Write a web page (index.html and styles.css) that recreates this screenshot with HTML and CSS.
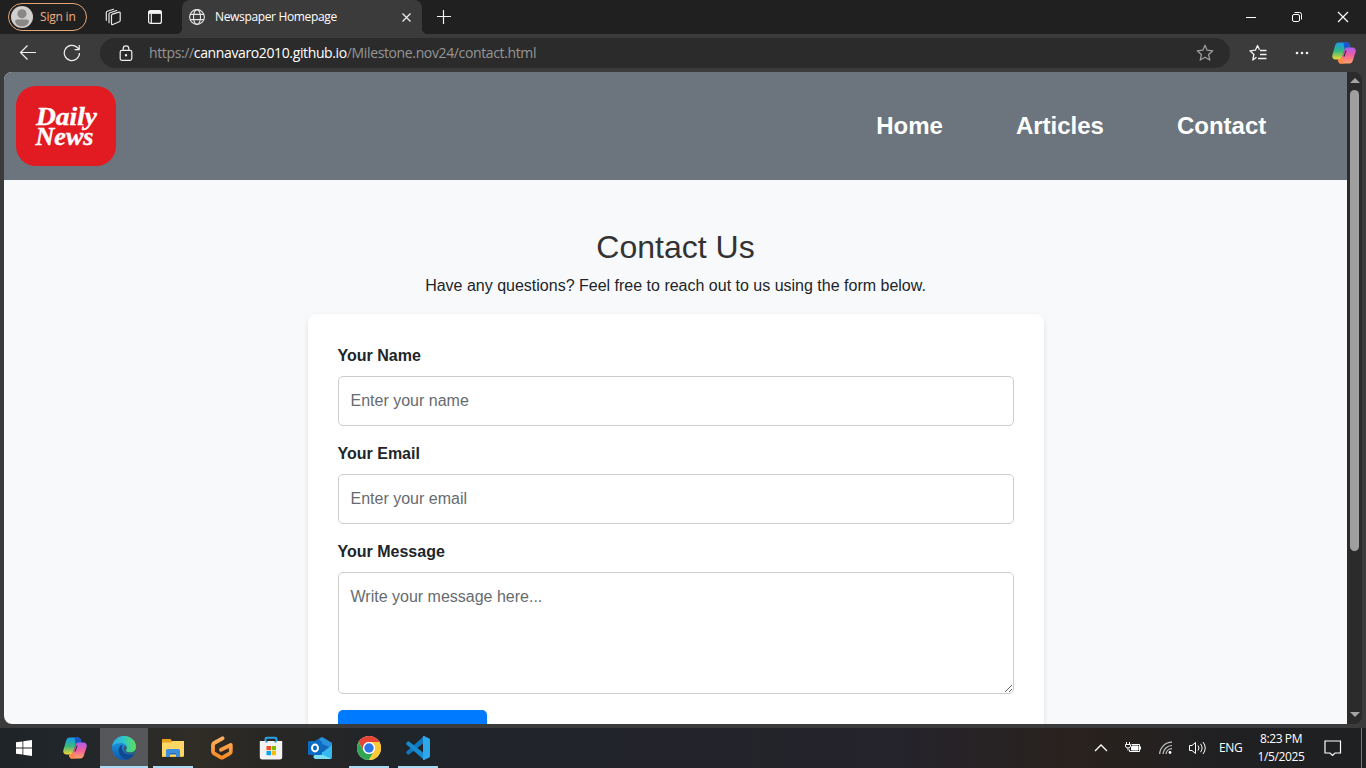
FILE: index.html
```html
<!DOCTYPE html>
<html lang="en">
<head>
<meta charset="utf-8">
<title>Newspaper Homepage</title>
<link rel="stylesheet" href="styles.css">
</head>
<body>
<svg width="0" height="0" class="defs">
  <defs>
    <linearGradient id="cpA" x1="0" y1="0" x2="0" y2="1"><stop offset="0" stop-color="#169cf0"/><stop offset=".5" stop-color="#35b880"/><stop offset="1" stop-color="#f5d632"/></linearGradient>
    <linearGradient id="cpB" x1="0" y1="0" x2="0" y2="1"><stop offset="0" stop-color="#b05cf0"/><stop offset=".5" stop-color="#f0609a"/><stop offset="1" stop-color="#ffa468"/></linearGradient>
    <linearGradient id="edA" x1="0" y1="0" x2="1" y2="0"><stop offset="0" stop-color="#2aa8e8"/><stop offset=".5" stop-color="#31c7c4"/><stop offset="1" stop-color="#5ede55"/></linearGradient>
    <linearGradient id="edB" x1="0" y1="0" x2="0" y2="1"><stop offset="0" stop-color="#25a5e8"/><stop offset="1" stop-color="#0c59b0"/></linearGradient>
    <linearGradient id="gA" x1="0" y1="0" x2="0" y2="1"><stop offset="0" stop-color="#ffb061"/><stop offset="1" stop-color="#f98a24"/></linearGradient>
    <symbol id="copilot" viewBox="0 0 24 24">
      <path d="M6.500 1.500h8.500c1.500 0 2.200.8 2.700 2.300l.8 2.700h-2.500c-2 0-3 .8-3.600 2.600L10 16c-.6 1.700-1.600 2.500-3.300 2.500H3.500C.8 18.500-.2 16.500.4 14L3 5c.6-2.200 1.500-3.500 3.500-3.500z" fill="url(#cpA)"/>
      <path d="M11.500 1.500H15c1.500 0 2.200.8 2.700 2.300l.8 2.700H16c-1.800 0-2.700.6-3.300 2z" fill="#1b55d0"/>
      <path d="M17.500 22.500H9c-1.500 0-2.200-.8-2.700-2.300l-.6-1.700h1c1.700 0 2.700-.8 3.300-2.500l2.700-7.500c.6-1.300 1.500-2 3.300-2h4.500c2.700 0 3.700 2 3.100 4.500L21 19c-.6 2.200-1.500 3.500-3.500 3.500z" fill="url(#cpB)"/>
      <path d="M12.500 22.500H9c-1.500 0-2.200-.8-2.700-2.300l-.6-1.700h1c1.800 0 3-.8 3.600-2.700z" fill="#ff8a4a"/>
      <path d="M13.400 9.500h1.200l-2 6h-1.200z" fill="#3a2a35"/>
    </symbol>
  </defs>
</svg>

<div class="titlebar">
  <div class="signin">
    <svg width="22" height="22" viewBox="0 0 22 22"><circle cx="11" cy="11" r="11" fill="#d2d0ce"/><circle cx="11" cy="7.800" r="4.600" fill="#8a8886"/><path d="M4 15.500q0-2 2-2h10q2 0 2 2-1.500 5-7 5t-7-5z" fill="#8a8886"/></svg>
    <span>Sign in</span>
  </div>
  <svg class="workspaces" width="18" height="18" viewBox="0 0 18 18" fill="none" stroke="#e8e8e8" stroke-width="1.200" stroke-linejoin="round" stroke-linecap="round"><path d="M7.500 7.500q0-1 1-1.400l6.500-2q1.200-.3 1.200.8v7.600q0 .9-.9 1.200l-6.500 2.800q-1.300.5-1.300-.8z"/><path d="M5 14.700V6.200q0-1 1-1.400L12.800 2.500M2.300 12.300V4.700q0-1 1-1.400L9.500 1.200"/></svg>
  <svg class="tab-actions" width="16" height="16" viewBox="0 0 16 16" fill="none" stroke="#f4f4f4" stroke-width="1.200"><rect x="1.600" y="1.600" width="12.800" height="12.800" rx="2"/><path d="M1.600 3.300h12.800" stroke-width="3.200"/><path d="M4.300 5v9.400"/></svg>
  <div class="tab">
    <svg width="16" height="16" viewBox="0 0 16 16" fill="none" stroke="#e6e6e6" stroke-width="1.100"><circle cx="8" cy="8" r="7.400"/><ellipse cx="8" cy="8" rx="3.500" ry="7.400"/><path d="M1.200 5.400h13.600M1.200 10.600h13.600"/></svg>
    <span>Newspaper Homepage</span>
    <svg class="tab-close" width="9" height="9" viewBox="0 0 9 9" stroke="#eee" stroke-width="1.200"><path d="M.5.5l8 8M8.500.5l-8 8"/></svg>
  </div>
  <svg class="new-tab" width="14" height="14" viewBox="0 0 14 14" stroke="#f2f2f2" stroke-width="1.200"><path d="M0 6.500h14M6.500 0v14"/></svg>
  <div class="window-controls">
    <svg width="46" height="34"><path d="M18 17.500h10" stroke="#fff"/></svg>
    <svg width="46" height="34" fill="none" stroke="#fff"><rect x="18.500" y="14.500" width="7" height="7" rx="1.500"/><path d="M20.500 12.500h5q2 0 2 2v5"/></svg>
    <svg width="46" height="34"><path d="M18 12l10 10M28 12L18 22" stroke="#fff" stroke-width="1.200"/></svg>
  </div>
</div>

<div class="toolbar">
  <div class="tool"><svg width="18" height="16" viewBox="0 0 18 16" fill="none" stroke="#f0f0f0" stroke-width="1.200"><path d="M17 7.500H1.500M8.500.5L1.500 7.500l7 7"/></svg></div>
  <div class="tool"><svg width="18" height="18" viewBox="0 0 18 18" fill="none" stroke="#f0f0f0" stroke-width="1.200"><path d="M16.500 9A7.600 7.600 0 1 1 14 3.300l2 2M16.200 1v4.600h-4.600"/></svg></div>
  <div class="address">
    <svg class="lock" width="14" height="17" viewBox="0 0 14 17" fill="none" stroke="#eee" stroke-width="1.200"><rect x="1.200" y="5.300" width="11.600" height="10" rx="1.800"/><path d="M4.200 5V3.700a2.800 2.800 0 0 1 5.600 0V5"/><circle cx="7" cy="10.300" r=".6" fill="#eee"/></svg>
    <div class="url">https://<b>cannavaro2010.github.io</b>/Milestone.nov24/contact.html</div>
    <svg width="18" height="18" viewBox="0 0 18 18" fill="none" stroke="#a0a0a0" stroke-width="1.200" stroke-linejoin="round"><path d="M9 1.200l2.200 5 5.600.6-4.200 3.700 1.200 5.600L9 13.300l-4.800 2.800 1.200-5.600L1.200 6.800l5.600-.6z"/></svg>
  </div>
  <svg class="favorites" width="18" height="18" viewBox="0 0 18 18" fill="none" stroke="#f2f2f2" stroke-width="1.300" stroke-linejoin="round"><path d="M7.500 13.200L3.800 16l1.100-5.500L1 6.800l5.400-.6L8.500 1.500l2 4.200M11 6.500h6.500M11 10.500h6.500M9 14.500h8.500"/></svg>
  <svg class="more" width="14" height="4" fill="#f2f2f2"><circle cx="2" cy="2" r="1.300"/><circle cx="7" cy="2" r="1.300"/><circle cx="12" cy="2" r="1.300"/></svg>
  <svg class="copilot-button" width="24" height="24"><use href="#copilot"/></svg>
</div>

<div class="viewport">
  <div class="page">
    <header class="site-header">
      <svg class="logo" width="100" height="80" viewBox="0 0 100 80"><rect width="100" height="80" rx="20" fill="#e21a22"/><g class="logo-text"><text x="20" y="39.200" textLength="61" lengthAdjust="spacingAndGlyphs">Daily</text><text x="19.500" y="59.200" textLength="58" lengthAdjust="spacingAndGlyphs">News</text></g></svg>
      <nav><a>Home</a><a>Articles</a><a>Contact</a></nav>
    </header>
    <main>
      <h2>Contact Us</h2>
      <p>Have any questions? Feel free to reach out to us using the form below.</p>
      <form class="card">
        <label for="name">Your Name</label>
        <input id="name" type="text" placeholder="Enter your name">
        <label for="email">Your Email</label>
        <input id="email" type="email" placeholder="Enter your email">
        <label for="message">Your Message</label>
        <textarea id="message" placeholder="Write your message here..."></textarea>
        <button type="button" class="submit" aria-label="Send"></button>
      </form>
    </main>
  </div>
  <div class="scrollbar"><i class="up"></i><i class="thumb"></i><i class="down"></i></div>
</div>

<div class="taskbar">
  <div class="app start"><svg width="16" height="16" viewBox="0 0 16 16" fill="#fff"><path d="M0 2.300l6.500-.9v6.200H0zM7.300 1.300L16 0v7.600H7.300zM0 8.400h6.500v6.200L0 13.700zM7.300 8.400H16V16l-8.700-1.300z"/></svg></div>
  <div class="app"><svg width="24" height="24"><use href="#copilot"/></svg></div>
  <div class="app open active"><svg width="24" height="24" viewBox="0 0 24 24"><circle cx="12" cy="12" r="12" fill="url(#edB)"/><path d="M.2 10.500C1 4.500 5.800 0 12 0c7 0 12 5 12 10.700 0 3.700-2.800 5.800-5.900 5.800-2.600 0-4.400-.9-4.400-1.900 0-.7 1-1.100 1-2.900 0-2.700-2.700-4.800-6-4.800-3.700 0-6.800 1.200-8.500 3.600z" fill="url(#edA)"/><path d="M10.500 8.600C7.900 9.600 6.300 12.600 6.800 15.500 7.600 20 11.400 23.300 15.500 23.500c3.500-1.200 6-3.500 7.200-6-3 1.700-7.200 1.700-10.200-.6-2.300-1.700-3.400-5.300-2-8.300z" fill="#10488f"/><path d="M24 13.500c-1.500 2-3.600 3-5.900 3-2.600 0-4.400-.9-4.400-1.900 0-.7 1-1.100 1-2.900 0-.9-.5-1.800-1.200-2.300-2 .8-2.500 4.300-.2 6.600 2.500 2.400 6.600 2.600 9.400 1.300.8-.5 1.300-2.800 1.300-3.800z" fill="#3d5a6e"/></svg></div>
  <div class="app open"><svg width="24" height="24" viewBox="0 0 24 24"><path d="M1 3.500q0-.5.500-.5h8l1.500 2H22v16H1z" fill="#e8a31c"/><path d="M1 6.500h9l2-1.500h11v15.500H1z" fill="#ffd766"/><path d="M5 21v-6.500q0-1.500 1.500-1.500h11q1.500 0 1.500 1.500V21h-4v-4H9v4z" fill="#3b8ddd"/><path d="M9 17h6v1.500H9z" fill="#236cb5"/></svg></div>
  <div class="app"><svg width="24" height="24" viewBox="0 0 24 24" fill="none" stroke="url(#gA)" stroke-width="3.800" stroke-linejoin="round" stroke-linecap="round"><path d="M12.500 2.300L4.200 7q-1.200.7-1.200 2v6.500q0 1.200 1 1.800l6.800 4.100q1 .6 2 0l7-4.100q1-.6 1-1.800V9L11 13.800"/></svg></div>
  <div class="app"><svg width="24" height="24" viewBox="0 0 24 24"><path d="M6.500 6V3q0-1.200 1.200-1.200h8.600q1.200 0 1.200 1.200v3" fill="none" stroke="#2ba3de" stroke-width="2"/><path d="M.8 5h22.400v16q0 2.500-2.500 2.500H3.300Q.8 23.500.8 21z" fill="#f3f3f3"/><path d="M6.500 5h2v1.500h-2zM15.500 5h2v1.500h-2z" fill="#2590d0"/><path d="M7.500 10H12v4.200H7.500z" fill="#f25022"/><path d="M12.800 10H17v4.200h-4.200z" fill="#7fba00"/><path d="M7.500 15H12v4.200H7.500z" fill="#00a4ef"/><path d="M12.800 15H17v4.200h-4.200z" fill="#ffb900"/></svg></div>
  <div class="app"><svg width="24" height="24" viewBox="0 0 24 24"><path d="M5 6l8-4.500q1-.6 2 0L24 7v14q0 2-2 2H8q-3 0-3-3z" fill="#1366b7"/><path d="M11 3l2-1.500q1-.6 2 0L24 7v5L14 8z" fill="#2990dc"/><path d="M8 15l7 1 9-7v12q0 2-2 2H8z" fill="#35baf0"/><path d="M8 16l15 6.500q-.5.500-1.500.5H8q-2 0-2.500-2z" fill="#7ce0f5"/><rect x="0" y="5" width="14" height="14" rx="1.500" fill="#096bc4"/><ellipse cx="7" cy="12" rx="3" ry="3.400" fill="none" stroke="#fff" stroke-width="2"/></svg></div>
  <div class="app open"><svg width="24" height="24" viewBox="0 0 24 24"><circle cx="12" cy="12" r="12" fill="#fff"/><path d="M1.600 6A12 12 0 0 1 22.400 6H12a6 6 0 0 0-5.200 9z" fill="#e94335"/><path d="M1.600 6A12 12 0 0 0 12 24l5.200-9A6 6 0 0 1 6.800 15z" fill="#30a652"/><path d="M22.400 6A12 12 0 0 1 12 24l5.200-9A6 6 0 0 0 12 6z" fill="#fcc934"/><circle cx="12" cy="12" r="6" fill="#fff"/><circle cx="12" cy="12" r="4.700" fill="#2b75e8"/></svg></div>
  <div class="app open"><svg width="24" height="24" viewBox="0 0 24 24"><path d="M.5 15.500L17 1v6.500L3 18.500q-.7.500-1.300 0L.5 17.200q-.6-.8 0-1.700z" fill="#0f78bd"/><path d="M.5 8.500L17 23v-6.500L3 5.500q-.7-.5-1.300 0L.5 6.800q-.6.800 0 1.700z" fill="#168bd1"/><path d="M17 .3q.5-.5 1.200-.2l5 2.400q.8.400.8 1.300v16.400q0 .9-.8 1.300l-5 2.400q-.7.300-1.200-.2z" fill="#2fa7ed"/></svg></div>
  <div class="tray">
    <svg class="chevron" width="14" height="8" fill="none" stroke="#fff" stroke-width="1.300"><path d="M1 7l6-6 6 6"/></svg>
    <svg class="battery" width="18" height="14" fill="none" stroke="#fff"><path d="M6.500 3.500h8v7H4.500V8.500M1.500 1v2M4.500 1v2M.5 3.500h5v1.500q0 2-2.500 2T.5 5zM3 7v2.500"/><path d="M7 5h6v4H6.500V7z" fill="#fff"/><path d="M15.500 5.500v3"/></svg>
    <svg class="wifi" width="14" height="14" fill="none" stroke="#c8c8c8" stroke-width="1.200"><path d="M.7 13A12.300 12.300 0 0 1 13 1.200M4 13A9 9 0 0 1 13 4.500M7 13a6 6 0 0 1 6-5.400"/><circle cx="11" cy="11.500" r="1.400" fill="#fff" stroke="none"/></svg>
    <svg class="speaker" width="18" height="14" fill="none" stroke="#fff"><path d="M.5 4.500H3l3.500-3v11L3 9.500H.5z"/><path d="M9 4.500q2 2.500 0 5M11.500 2.800q3.200 4.200 0 8.400M14 1q4.500 6 0 12"/></svg>
    <span class="language">ENG</span>
    <div class="clock"><span>8:23 PM</span><span>1/5/2025</span></div>
    <svg class="notifications" width="18" height="17" fill="none" stroke="#fff" stroke-width="1.200"><path d="M1 1h15.500v12H11l-2.500 2.500L6 13H1z"/></svg>
    <i class="show-desktop"></i>
  </div>
</div>
</body>
</html>
```
FILE: styles.css
```css
* { box-sizing: border-box; }
body {
  margin: 0;
  width: 1366px;
  height: 768px;
  overflow: hidden;
  display: flex;
  flex-direction: column;
  background: #3b3b3b;
  font-family: "Liberation Sans", Arial, sans-serif;
}
svg { display: block; flex: none; }
.defs { position: absolute; }

.titlebar {
  height: 34px;
  flex: none;
  display: flex;
  align-items: center;
  background: #202020;
  font-family: "Open Sans", "Noto Sans", sans-serif;
  font-size: 12px;
  line-height: 16px;
  color: #fff;
}
.signin span, .tab span { padding-bottom: 1px; }
.signin {
  margin-left: 8px;
  width: 79px;
  height: 28px;
  border: 1.500px solid #e5a577;
  border-radius: 14px;
  display: flex;
  align-items: center;
  gap: 7px;
  padding-left: 2px;
  color: #f2ad80;
  white-space: nowrap;
  letter-spacing: -.2px;
}
.workspaces { margin-left: 17px; }
.tab-actions { margin-left: 25px; }
.tab {
  width: 240px;
  height: 34px;
  margin-left: 19px;
  padding: 0 11px 0 7px;
  display: flex;
  align-items: center;
  gap: 10px;
  border-radius: 8px 8px 0 0;
  background: #3b3b3b;
  letter-spacing: -.35px;
  white-space: nowrap;
  position: relative;
}
.tab::before, .tab::after {
  content: "";
  position: absolute;
  bottom: 0;
  width: 6px;
  height: 6px;
}
.tab::before { left: -6px; background: radial-gradient(circle at 0 0, transparent 6px, #3b3b3b 6.500px); }
.tab::after { right: -6px; background: radial-gradient(circle at 100% 0, transparent 6px, #3b3b3b 6.500px); }
.tab-close { margin-left: auto; }
.new-tab { margin-left: 15px; }
.window-controls { margin-left: auto; display: flex; }

.toolbar {
  height: 38px;
  flex: none;
  display: flex;
  align-items: center;
  padding-left: 6px;
}
.tool { width: 44px; display: flex; justify-content: center; }
.address {
  width: 1130px;
  height: 30px;
  margin-left: 6px;
  padding: 0 16px 0 19px;
  border-radius: 15px;
  background: #2b2b2b;
  display: flex;
  align-items: center;
}
.url {
  margin: 0 auto 0 16px;
  color: #969696;
  font: 14px/20px "Open Sans", "Noto Sans", sans-serif;
  letter-spacing: -.37px;
  white-space: nowrap;
}
.url b { color: #fff; font-weight: 400; }
.favorites { margin-left: 19px; }
.more { margin-left: 28px; }
.copilot-button { margin-left: 23px; }

.viewport {
  height: 652px;
  flex: none;
  margin: 0 4px;
  display: flex;
  border-radius: 8px;
  overflow: hidden;
  background: #2b2b2b;
}
.page { width: 1343px; background: #f8f9fb; overflow: hidden; }
.site-header {
  height: 108px;
  padding: 0 80.700px 0 12px;
  background: #6c757d;
  display: flex;
  align-items: center;
  justify-content: space-between;
}
.logo-text {
  fill: #fff;
  stroke: #fff;
  stroke-width: .4px;
  font: italic 700 26px "Liberation Serif", serif;
}
nav { display: flex; gap: 73px; color: #fff; font-size: 24px; font-weight: 700; }
main { padding-top: 48px; text-align: center; color: #212529; }
h2 { margin: 0 0 8px; font-size: 32px; font-weight: 400; line-height: 38.400px; color: #333; }
p { margin: 0 0 16px; font-size: 16px; line-height: 24px; }
.card {
  width: 736px;
  height: 520px;
  margin: 0 auto;
  padding: 29.600px 30px;
  background: #fff;
  border-radius: 8px;
  box-shadow: 0 2px 5px rgba(0, 0, 0, .1);
  display: flex;
  flex-direction: column;
  text-align: left;
}
.card label { margin-bottom: 8px; font-weight: 700; line-height: 24px; }
.card input, .card textarea {
  flex: none;
  width: 676px;
  height: 50px;
  margin: 0 0 16px;
  padding: 12px;
  border: 1px solid #ccc;
  border-radius: 5px;
  background: #fff;
  font: 16px/24px "Liberation Sans", Arial, sans-serif;
}
.card textarea { height: 122px; resize: vertical; }
.card ::placeholder { color: #666b70; opacity: 1; }
.submit { width: 149px; height: 44px; border: 0; border-radius: 5px; background: #007bff; }

.scrollbar { width: 15px; display: flex; flex-direction: column; align-items: center; padding: 6px 0 7px; }
.up, .down { border: 5px solid transparent; width: 0; height: 0; }
.up { border-top: 0; border-bottom-color: #a5a5a5; }
.down { border-bottom: 0; border-top-color: #a5a5a5; margin-top: auto; }
.thumb { width: 9px; height: 461px; margin-top: 7px; border-radius: 5px; background: #9f9f9f; }

.taskbar {
  height: 40px;
  margin-top: 4px;
  flex: none;
  display: flex;
  gap: 1px;
  background: linear-gradient(90deg, #1f2429 0, #23272a 90px, #302d26 190px, #292724 260px, #20252a 400px, #25232b 900px, #29221e 1080px, #202022 1220px, #1f2022);
  color: #fff;
}
.app { width: 48px; display: flex; align-items: center; justify-content: center; }
.start { width: 50px; padding-right: 2px; }
.open { background: linear-gradient(#a9daf4, #a9daf4) center bottom / 40px 2px no-repeat; }
.active { background: linear-gradient(#a9daf4, #a9daf4) center bottom / 48px 2px no-repeat #56575a; }
.tray {
  margin-left: auto;
  display: flex;
  align-items: center;
  font: 12px/18px "Open Sans", "Noto Sans", sans-serif;
  letter-spacing: -.4px;
}
.battery { margin-left: 17px; }
.wifi { margin-left: 16px; }
.speaker { margin-left: 16px; }
.language { width: 24px; margin-left: 12px; }
.clock { width: 56px; margin-left: 10px; display: flex; flex-direction: column; align-items: center; }
.notifications { margin-left: 15px; }
.show-desktop { width: 1px; height: 40px; margin: 0 4px 0 19px; background: #777; }
```
